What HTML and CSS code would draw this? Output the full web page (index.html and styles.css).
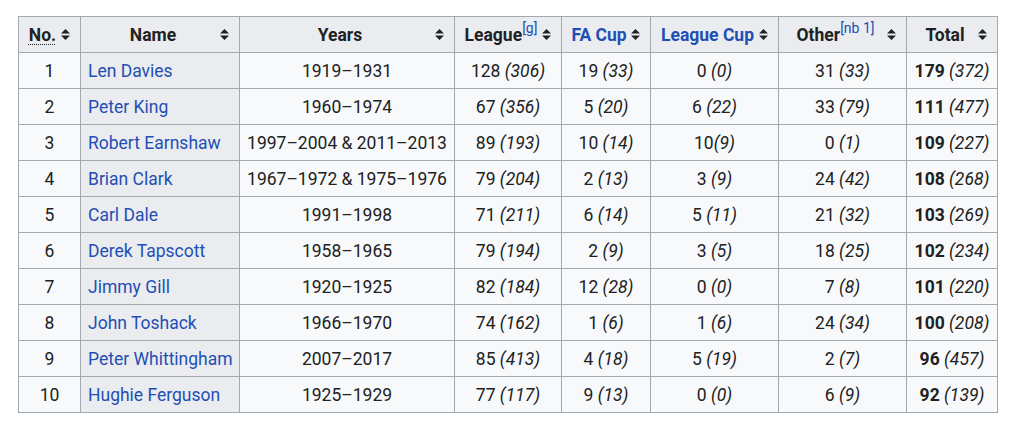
FILE: index.html
```html
<!DOCTYPE html>
<html lang="en">
<head>
<meta charset="utf-8">
<link rel="stylesheet" href="styles.css">
</head>
<body>
<table class="wikitable">
  <colgroup>
    <col class="c-no"><col class="c-name"><col class="c-years"><col class="c-league"><col class="c-fa"><col class="c-lc"><col class="c-other"><col class="c-total">
  </colgroup>
  <thead>
    <tr>
      <th class="sortable"><abbr class="abbr" title="Number">No.</abbr></th>
      <th class="sortable">Name</th>
      <th class="sortable">Years</th>
      <th class="sortable">League<sup class="ref">[g]</sup></th>
      <th class="sortable"><a class="link" href="#">FA Cup</a></th>
      <th class="sortable"><a class="link" href="#">League Cup</a></th>
      <th class="sortable">Other<sup class="ref">[nb 1]</sup></th>
      <th class="sortable">Total</th>
    </tr>
  </thead>
  <tbody>
    <tr><td>1</td><th class="rowhead"><a class="link" href="#">Len Davies</a></th><td>1919–1931</td><td>128 <i>(306)</i></td><td>19 <i>(33)</i></td><td>0 <i>(0)</i></td><td>31 <i>(33)</i></td><td><b>179</b> <i>(372)</i></td></tr>
    <tr><td>2</td><th class="rowhead"><a class="link" href="#">Peter King</a></th><td>1960–1974</td><td>67 <i>(356)</i></td><td>5 <i>(20)</i></td><td>6 <i>(22)</i></td><td>33 <i>(79)</i></td><td><b>111</b> <i>(477)</i></td></tr>
    <tr><td>3</td><th class="rowhead"><a class="link" href="#">Robert Earnshaw</a></th><td>1997–2004 &amp; 2011–2013</td><td>89 <i>(193)</i></td><td>10 <i>(14)</i></td><td>10<i>(9)</i></td><td>0 <i>(1)</i></td><td><b>109</b> <i>(227)</i></td></tr>
    <tr><td>4</td><th class="rowhead"><a class="link" href="#">Brian Clark</a></th><td>1967–1972 &amp; 1975–1976</td><td>79 <i>(204)</i></td><td>2 <i>(13)</i></td><td>3 <i>(9)</i></td><td>24 <i>(42)</i></td><td><b>108</b> <i>(268)</i></td></tr>
    <tr><td>5</td><th class="rowhead"><a class="link" href="#">Carl Dale</a></th><td>1991–1998</td><td>71 <i>(211)</i></td><td>6 <i>(14)</i></td><td>5 <i>(11)</i></td><td>21 <i>(32)</i></td><td><b>103</b> <i>(269)</i></td></tr>
    <tr><td>6</td><th class="rowhead"><a class="link" href="#">Derek Tapscott</a></th><td>1958–1965</td><td>79 <i>(194)</i></td><td>2 <i>(9)</i></td><td>3 <i>(5)</i></td><td>18 <i>(25)</i></td><td><b>102</b> <i>(234)</i></td></tr>
    <tr><td>7</td><th class="rowhead"><a class="link" href="#">Jimmy Gill</a></th><td>1920–1925</td><td>82 <i>(184)</i></td><td>12 <i>(28)</i></td><td>0 <i>(0)</i></td><td>7 <i>(8)</i></td><td><b>101</b> <i>(220)</i></td></tr>
    <tr><td>8</td><th class="rowhead"><a class="link" href="#">John Toshack</a></th><td>1966–1970</td><td>74 <i>(162)</i></td><td>1 <i>(6)</i></td><td>1 <i>(6)</i></td><td>24 <i>(34)</i></td><td><b>100</b> <i>(208)</i></td></tr>
    <tr><td>9</td><th class="rowhead"><a class="link" href="#">Peter Whittingham</a></th><td>2007–2017</td><td>85 <i>(413)</i></td><td>4 <i>(18)</i></td><td>5 <i>(19)</i></td><td>2 <i>(7)</i></td><td><b>96</b> <i>(457)</i></td></tr>
    <tr><td>10</td><th class="rowhead"><a class="link" href="#">Hughie Ferguson</a></th><td>1925–1929</td><td>77 <i>(117)</i></td><td>9 <i>(13)</i></td><td>0 <i>(0)</i></td><td>6 <i>(9)</i></td><td><b>92</b> <i>(139)</i></td></tr>
  </tbody>
</table>
</body>
</html>
```

FILE: styles.css
```css
html, body {
  margin: 0;
  padding: 0;
  background: #ffffff;
}

body {
  padding: 16px 0 0 18px;
  font-family: Roboto, "Liberation Sans", sans-serif;
  font-size: 17.5px;
  color: #202122;
}

.wikitable {
  border-collapse: collapse;
  table-layout: fixed;
  width: 979px;
  background: #f8f9fa;
  color: #202122;
  border: 1px solid #a2a9b1;
}

.c-no { width: 62px; }
.c-name { width: 159px; }
.c-years { width: 215px; }
.c-league { width: 107px; }
.c-fa { width: 89px; }
.c-lc { width: 128px; }
.c-other { width: 128px; }
.c-total { width: 91px; }

.wikitable th,
.wikitable td {
  border: 1px solid #a2a9b1;
  padding: 3.5px 7px;
  line-height: 28px;
  text-align: center;
  white-space: nowrap;
}

.wikitable thead th {
  background-color: #eaecf0;
  font-weight: bold;
}

.wikitable th.sortable {
  padding-right: 21px;
  background-image: url("data:image/svg+xml,%3Csvg xmlns='http://www.w3.org/2000/svg' width='9' height='11' viewBox='0 0 9 11'%3E%3Cpath d='M0 4.5L4.5 0L9 4.5Z M0 6.5L9 6.5L4.5 11Z' fill='%23202122'/%3E%3C/svg%3E");
  background-repeat: no-repeat;
  background-position: right 10px center;
}

.wikitable th.rowhead {
  background-color: #eaecf0;
  font-weight: normal;
  text-align: left;
}

.wikitable td i {
  font-style: italic;
}

.wikitable td b {
  font-weight: bold;
}

.link {
  color: #1f4fb4;
  text-decoration: none;
}

.abbr {
  text-decoration: underline dotted;
  text-underline-offset: 3px;
  text-decoration-thickness: 1px;
}

.ref {
  font-size: 80%;
  font-weight: normal;
  color: #1f4fb4;
  line-height: 1;
  vertical-align: super;
  position: relative;
  top: -1px;
}
```
